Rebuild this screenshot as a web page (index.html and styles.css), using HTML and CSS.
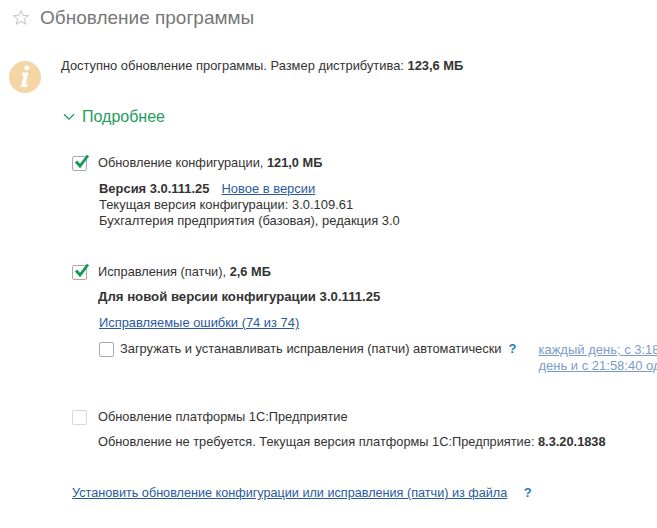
FILE: index.html
```html
<!DOCTYPE html>
<html lang="ru">
<head>
<meta charset="utf-8">
<title>Обновление программы</title>
<link rel="stylesheet" href="styles.css">
</head>
<body>
<div class="page">
  <header class="head">
    <svg class="star" width="18" height="18" viewBox="0 0 18 18"><path d="M9 1.600l2.200 5h5.400l-4.300 3.400 1.600 5.400L9 12.300l-4.900 3.100 1.600-5.400L1.400 6.600h5.400z" fill="none" stroke="#c4c4c4" stroke-width="1"/></svg>
    <h1 class="title">Обновление программы</h1>
  </header>
  <section class="notice">
    <svg class="info" width="32" height="32" viewBox="0 0 32 32"><circle cx="16" cy="16" r="16" fill="#f5d5a6"/><path d="M17.800 4.200a2.500 2.500 0 1 1 0 5 2.500 2.500 0 0 1 0-5zM13.200 11.500h6.200l-2.800 11.800h2.200l-.6 2.700h-6.400l2.800-11.800h-1.800z" fill="#fff"/></svg>
    <p class="notice-text">Доступно обновление программы. Размер дистрибутива: <b>123,6 МБ</b></p>
  </section>
  <div class="more">
    <svg width="12" height="8" viewBox="0 0 12 8"><path d="M1 1.200l5 5 5-5" fill="none" stroke="#1f9c5a" stroke-width="1.300"/></svg>
    <span>Подробнее</span>
  </div>
  <section class="block block-config">
    <div class="check-row">
      <span class="box"><svg class="tick" width="17" height="16" viewBox="0 0 17 16"><path d="M3 7.500l4 4.500 8-10.500" fill="none" stroke="#0c9b50" stroke-width="2.800"/></svg></span>
      <span>Обновление конфигурации, <b>121,0 МБ</b></span>
    </div>
    <div class="version">
      <div><b>Версия 3.0.111.25</b><a class="link gap" href="#">Новое в версии</a></div>
      <div>Текущая версия конфигурации: 3.0.109.61</div>
      <div>Бухгалтерия предприятия (базовая), редакция 3.0</div>
    </div>
  </section>
  <section class="block block-patch">
    <div class="check-row">
      <span class="box"><svg class="tick" width="17" height="16" viewBox="0 0 17 16"><path d="M3 7.500l4 4.500 8-10.500" fill="none" stroke="#0c9b50" stroke-width="2.800"/></svg></span>
      <span>Исправления (патчи), <b>2,6 МБ</b></span>
    </div>
    <p class="patch-for"><b>Для новой версии конфигурации 3.0.111.25</b></p>
    <p class="patch-link"><a class="link" href="#">Исправляемые ошибки (74 из 74)</a></p>
    <div class="auto">
      <span class="box"></span>
      <span class="auto-label">Загружать и устанавливать исправления (патчи) автоматически</span>
      <span class="help">?</span>
      <a class="schedule" href="#">каждый день; с 3:18:20 один раз в<br>день и с 21:58:40 один раз в день</a>
    </div>
  </section>
  <section class="block block-platform">
    <div class="check-row">
      <span class="box box-off"></span>
      <span>Обновление платформы 1С:Предприятие</span>
    </div>
    <p class="platform-note">Обновление не требуется. Текущая версия платформы 1С:Предприятие: <b>8.3.20.1838</b></p>
  </section>
  <footer class="foot">
    <a class="link foot-link" href="#">Установить обновление конфигурации или исправления (патчи) из файла</a>
    <span class="help help-foot">?</span>
  </footer>
</div>
</body>
</html>
```
FILE: styles.css
```css
html, body {
  margin: 0;
  background: #fff;
}
body {
  width: 657px;
  height: 528px;
  overflow: hidden;
  font-family: "Liberation Sans", Arial, sans-serif;
  font-size: 12.8px;
  line-height: 16px;
  color: #333;
}
p { margin: 0; }
b { font-weight: bold; }
.page {
  display: flex;
  flex-direction: column;
  width: 657px;
  overflow: hidden;
}
.head {
  display: flex;
  align-items: center;
  gap: 10px;
  height: 36px;
  padding-left: 12px;
}
.title {
  margin: 0;
  font-size: 19px;
  font-weight: normal;
  color: #777;
}
.notice {
  display: flex;
  gap: 20px;
  height: 44px;
  padding-left: 9px;
  margin-top: 24px;
}
.notice-text { margin-top: -2px; font-size: 12.9px; }
.info { margin-top: 1px; }
.more {
  display: flex;
  align-items: center;
  gap: 7px;
  padding-left: 63px;
  margin-top: 3px;
  font-size: 16px;
  line-height: 20px;
  color: #1f9c5a;
}
.block { padding-left: 72px; }
.block-config { margin-top: 28px; }
.check-row {
  display: flex;
  align-items: center;
  gap: 11px;
  height: 16px;
}
.box {
  position: relative;
  flex: none;
  box-sizing: border-box;
  width: 15px;
  height: 15px;
  border: 1px solid #aaa;
  border-radius: 2px;
  background: #fff;
}
.box-off { border-color: #d8d8d8; }
.tick {
  position: absolute;
  left: 0;
  top: -3px;
}
.version {
  margin-top: 10px;
  padding-left: 27px;
  font-size: 12.95px;
}
.link {
  color: #2a5a9e;
  text-decoration: underline;
}
.gap { margin-left: 12px; }
.block-patch { margin-top: 35px; }
.patch-for { margin-top: 9px; padding-left: 26px; font-size: 13.2px; }
.patch-link { margin-top: 10px; padding-left: 27px; font-size: 12.9px; }
.auto {
  display: flex;
  align-items: flex-start;
  margin-top: 10px;
  padding-left: 27px;
}
.auto .box { margin-top: 1px; }
.auto-label { margin-left: 6px; white-space: nowrap; font-size: 12.87px; }
.help {
  margin-left: 7px;
  color: #1a7fb5;
  font-size: 13px;
  font-weight: bold;
}
.schedule {
  flex: none;
  margin-left: 22px;
  margin-top: 1px;
  font-size: 13px;
  color: #7b9cc9;
  text-decoration: underline;
  white-space: nowrap;
}
.block-platform { margin-top: 35px; }
.platform-note { margin-top: 9px; padding-left: 26px; }
.foot {
  padding-left: 72px;
  margin-top: 35px;
}
.foot-link { font-size: 12.65px; }
.help-foot { margin-left: 13px; }
```
